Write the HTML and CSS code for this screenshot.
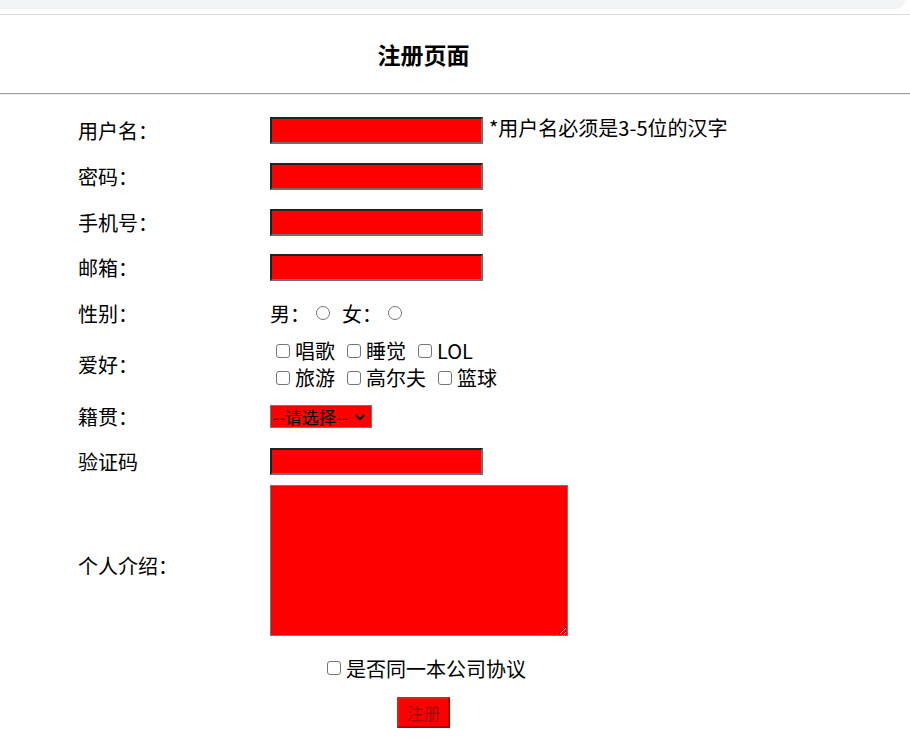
FILE: index.html
```html
<!DOCTYPE html>
<html lang="zh-CN">
<head>
<meta charset="utf-8">
<title>注册页面</title>
<link rel="stylesheet" href="styles.css">
</head>
<body>
<div class="chrome"><div class="chrome-bar"></div></div>
<header class="head"><h3 class="title">注册页面</h3></header>
<hr class="rule">
<form class="form">
  <div class="row r46">
    <label class="lbl">用户名：</label>
    <div class="ctl"><input class="txt" type="text"><span class="hint">*用户名必须是3-5位的汉字</span></div>
  </div>
  <div class="row r46">
    <label class="lbl">密码：</label>
    <div class="ctl"><input class="txt" type="password"></div>
  </div>
  <div class="row r46">
    <label class="lbl">手机号：</label>
    <div class="ctl"><input class="txt" type="text"></div>
  </div>
  <div class="row r45">
    <label class="lbl">邮箱：</label>
    <div class="ctl"><input class="txt" type="text"></div>
  </div>
  <div class="row r46">
    <label class="lbl">性别：</label>
    <div class="ctl">男：<input class="radio" type="radio" name="sex">女：<input class="radio" type="radio" name="sex"></div>
  </div>
  <div class="row r56">
    <label class="lbl">爱好：</label>
    <div class="ctl lines">
      <div class="line"><input class="chk" type="checkbox">唱歌<input class="chk" type="checkbox">睡觉<input class="chk" type="checkbox">LOL</div>
      <div class="line"><input class="chk" type="checkbox">旅游<input class="chk" type="checkbox">高尔夫<input class="chk" type="checkbox">篮球</div>
    </div>
  </div>
  <div class="row r48">
    <label class="lbl">籍贯：</label>
    <div class="ctl">
      <span class="selwrap">
        <select class="sel"><option>--请选择--</option><option>北京</option><option>上海</option></select>
        <svg class="chev" width="12" height="8" viewBox="0 0 12 8" aria-hidden="true"><path d="M1.5 1.8 L6 6.2 L10.5 1.8" fill="none" stroke="#111" stroke-width="2"/></svg>
      </span>
    </div>
  </div>
  <div class="row r43">
    <label class="lbl">验证码</label>
    <div class="ctl"><input class="txt" type="text"></div>
  </div>
  <div class="row r155">
    <label class="lbl lbl-low">个人介绍：</label>
    <div class="ctl"><textarea class="area"></textarea></div>
  </div>
  <div class="center agree"><input class="chk chk-first" type="checkbox">是否同一本公司协议</div>
  <div class="center submit"><button class="btn" type="button">注册</button></div>
</form>
</body>
</html>
```
FILE: styles.css
```css
html, body {
  margin: 0;
  padding: 0;
  background: #fff;
}
body {
  font-family: "Noto Sans CJK SC", "Microsoft YaHei", sans-serif;
  font-size: 20px;
  color: #000;
}
.chrome {
  height: 14px;
  border-bottom: 1px solid #dadce0;
}
.chrome-bar {
  height: 9px;
  width: 905px;
  background: #f1f3f4;
  border-bottom-right-radius: 9px;
}
.head {
  height: 78px;
  width: 847px;
  display: flex;
  align-items: center;
  justify-content: center;
}
.title {
  margin: 0;
  font-size: 23px;
  font-weight: bold;
  line-height: 30px;
}
.rule {
  margin: 0;
  border: 0;
  border-top: 1px solid #9a9a9a;
  border-bottom: 1px solid #eeeeee;
  height: 0;
}
.form {
  margin: 12px 0 0 0;
  padding-left: 78px;
}
.row {
  display: grid;
  grid-template-columns: 192px 1fr;
  align-items: center;
}
.r46 { height: 46px; }
.r45 { height: 45px; }
.r56 { height: 56px; }
.r48 { height: 48px; }
.r43 { height: 43px; }
.r155 { height: 155px; }
.lbl {
  line-height: 27px;
}
.lbl-low {
  padding-top: 9px;
}
.ctl {
  display: flex;
  align-items: center;
  line-height: 27px;
  white-space: nowrap;
}
.lines {
  display: block;
}
.line {
  display: flex;
  align-items: center;
  height: 27px;
}
.txt {
  box-sizing: border-box;
  width: 213px;
  height: 27px;
  margin: 0;
  padding: 1px 2px;
  background: #ff0000;
  border-style: solid;
  border-width: 2px;
  border-top-color: #222222;
  border-left-color: #222222;
  border-bottom-color: #6f6f6f;
  border-right-color: #6f6f6f;
  font-size: 16px;
  font-family: inherit;
}
.hint {
  margin-left: 6px;
  margin-bottom: 6px;
}
.radio {
  appearance: none;
  -webkit-appearance: none;
  box-sizing: border-box;
  width: 14px;
  height: 14px;
  margin: 0 12px 0 6px;
  border: 1px solid #767676;
  border-radius: 50%;
  background: #fff;
}
.chk {
  appearance: none;
  -webkit-appearance: none;
  box-sizing: border-box;
  width: 14px;
  height: 14px;
  margin: 0 5px 0 12px;
  border: 1px solid #767676;
  border-radius: 3px;
  background: #fff;
}
.line .chk:first-child,
.chk-first {
  margin-left: 6px;
}
.selwrap {
  position: relative;
  display: inline-block;
  height: 23px;
}
.sel {
  box-sizing: border-box;
  width: 102px;
  height: 23px;
  margin: 0;
  padding: 0 0 0 2px;
  background-color: #ff0000;
  border: 1px solid #767676;
  border-radius: 0;
  font-family: inherit;
  font-size: 17px;
  line-height: 21px;
  color: #000;
  appearance: none;
  -webkit-appearance: none;
  display: block;
}
.chev {
  position: absolute;
  left: 84px;
  top: 8px;
  pointer-events: none;
}
.area {
  box-sizing: border-box;
  width: 298px;
  height: 151px;
  margin: 0;
  background: #ff0000;
  border: 1px solid #767676;
  font-family: inherit;
}
.center {
  width: 691px;
  display: flex;
  justify-content: center;
  align-items: center;
}
.agree {
  margin-top: 12px;
  height: 36px;
}
.submit {
  margin-top: 11px;
}
.btn {
  box-sizing: border-box;
  width: 53px;
  height: 31px;
  margin: 0;
  padding: 0;
  background: #ff0000;
  border-style: solid;
  border-width: 2px;
  border-top-color: #dd2020;
  border-left-color: #dd2020;
  border-bottom-color: #b80000;
  border-right-color: #b80000;
  color: #9b0a0a;
  font-family: inherit;
  font-size: 17px;
  line-height: 27px;
}
```
